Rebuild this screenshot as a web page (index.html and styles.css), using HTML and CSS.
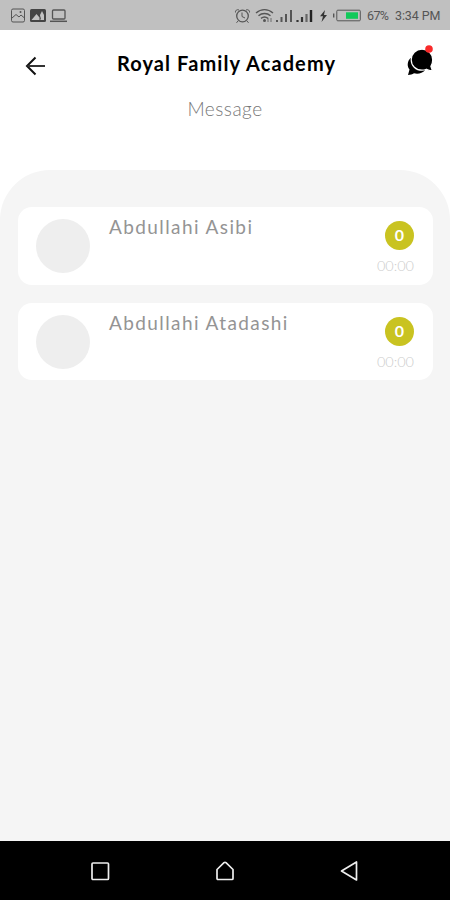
FILE: index.html
```html
<!DOCTYPE html>
<html lang="en">
<head>
    <meta charset="UTF-8">
    <meta name="viewport" content="width=device-width, initial-scale=1.0">
    <title>Royal Family Academy</title>
    <link rel="stylesheet" href="styles.css">
</head>
<body>
    <div class="status-bar">
        <svg class="status-left" width="70" height="30" viewBox="0 0 70 30" fill="none" stroke="#555">
            <rect x="11.5" y="9" width="13" height="13" rx="1.5"/>
            <path d="M12 18l4-3.500 3 2.500 2-2 3.500 3"/>
            <circle cx="20.500" cy="12" r="1" fill="#555" stroke="none"/>
            <rect x="30" y="9" width="16" height="13" rx="1.500" fill="#444" stroke="none"/>
            <path d="M31.500 20l5-6 3 3.500v2.500zM40 20c2-1 0-3 0-5l2-4 2 4v5z" fill="#c2c2c2" stroke="none"/>
            <rect x="52.500" y="10" width="12.500" height="9" rx="1" stroke-width="1.300"/>
            <path d="M50 21.300h17" stroke-width="1.500"/>
        </svg>
        <svg class="status-right" width="130" height="30" viewBox="232 0 130 30" fill="none" stroke="#555">
            <circle cx="242.500" cy="16" r="5.800" stroke-width="1.300"/>
            <path d="M242 12.500v4l3 1.500M235.500 12.500c-.5-2 1.500-3.500 3.500-2.500M249.500 12.500c.5-2-1.500-3.500-3.500-2.500M238 21l-1.500 1.800M247 21l1.500 1.800"/>
            <path d="M256 13c5-4.500 12-4.500 17 0M258.500 15.800c3.500-3 8.500-3 12 0M261 18.400c2-1.600 5-1.600 7 0" stroke-width="1.400"/>
            <circle cx="264.500" cy="20.600" r="1.500" fill="#555" stroke="none"/>
            <path d="M268 22v-4M271 22v-4" stroke-width=".8"/>
            <path d="M277 22v-2M281.500 22v-5M286 22v-8M291 22V10" stroke-width="2"/>
            <path d="M297.500 22v-2M302 22v-5" stroke="#333" stroke-width="2.200"/>
            <path d="M306.500 22v-8" stroke="#666" stroke-width="2.200"/>
            <path d="M311 22V10" stroke="#222" stroke-width="2.400"/>
            <path d="M325 10l-5 6.300h3L321.500 22l5.500-7h-3z" fill="#333" stroke="none"/>
            <path d="M333.700 13.500v4" stroke-width="1.400"/>
            <rect x="336.800" y="10.200" width="23.500" height="10.600" rx="1"/>
            <rect x="346" y="12.300" width="12" height="6.500" fill="#12c95a" stroke="none"/>
        </svg>
        <span class="battery">67%</span>
        <span class="clock">3:34 PM</span>
    </div>

    <header class="header">
        <svg width="22" height="20" viewBox="0 0 22 20" fill="none" stroke="#111" stroke-width="2">
            <path d="M10.500 1.500L2 10l8.500 8.500"/>
            <path d="M2.500 10H20" stroke="#333"/>
        </svg>
        <h1 class="title">Royal Family Academy</h1>
        <svg class="chat" width="28" height="32" viewBox="0 0 28 32">
            <path d="M3.500 14C0 17.500 0 22.500 2.500 25.500L1 31c2.500 0 4.300-.6 6-1.700 4 1 8.500 0 11-3z"/>
            <path d="M15 5.200c-6.200 0-10.800 4.500-10.800 10.500S8.800 26.200 15 26.200c1.600 0 3-.3 4.400-.9 1.600 1 3.400 1.500 6 1.500l-1.500-4.500c1.200-1.800 1.800-4 1.800-6.600 0-6-4.500-10.500-10.700-10.500z" stroke="white" stroke-width="1.200"/>
            <circle cx="22" cy="5" r="3.800" fill="#f92a2a"/>
        </svg>
    </header>
    <h2 class="subtitle">Message</h2>

    <main class="panel">
        <div class="card">
            <div class="avatar"></div>
            <div class="name">Abdullahi Asibi</div>
            <div class="info">
                <span class="badge">0</span>
                <span class="time">00:00</span>
            </div>
        </div>
        <div class="card">
            <div class="avatar"></div>
            <div class="name">Abdullahi Atadashi</div>
            <div class="info">
                <span class="badge">0</span>
                <span class="time">00:00</span>
            </div>
        </div>
    </main>

    <nav class="nav-bar">
        <svg width="20" height="22" viewBox="0 0 20 22" fill="none" stroke="#eee" stroke-width="1.700">
            <rect x="2" y="3" width="16.500" height="16.500" rx="1"/>
        </svg>
        <svg width="20" height="22" viewBox="0 0 20 22" fill="none" stroke="#eee" stroke-width="1.700" stroke-linejoin="round">
            <path d="M2 9.500L9 2.700q1-.8 2 0l7 6.800v9q0 1-1 1H3q-1 0-1-1z"/>
        </svg>
        <svg width="20" height="22" viewBox="0 0 20 22" fill="none" stroke="#eee" stroke-width="1.700" stroke-linejoin="round">
            <path d="M17.500 2v18L2.500 11z"/>
        </svg>
    </nav>
</body>
</html>
```

FILE: styles.css
```css
* {
    box-sizing: border-box;
}
body {
    margin: 0;
    height: 900px;
    display: flex;
    flex-direction: column;
    background: white;
    font-family: Lato, "Open Sans", sans-serif;
    overflow: hidden;
}
.status-bar {
    height: 30px;
    display: flex;
    align-items: center;
    background: #c0c0c0;
    color: #555;
    font: 12.5px/30px Roboto, sans-serif;
    white-space: nowrap;
}
.status-right {
    margin-left: 162px;
}
.battery {
    width: 28px;
    margin-left: 5px;
    padding-top: 2px;
    letter-spacing: -0.6px;
}
.clock {
    padding-top: 2px;
    letter-spacing: -0.1px;
}
.header {
    height: 66px;
    padding: 5px 15px 0 25px;
    display: flex;
    align-items: center;
    justify-content: space-between;
}
.title {
    margin: 0 1px 5px 0;
    font-size: 20px;
    line-height: 24px;
    font-weight: 700;
    letter-spacing: 1.1px;
    white-space: nowrap;
}
.chat {
    margin-top: -12px;
}
.subtitle {
    margin: 0;
    height: 74px;
    text-align: center;
    font-size: 19px;
    line-height: 26px;
    font-weight: 300;
    letter-spacing: 0.5px;
    color: #777;
}
.panel {
    flex: 1;
    padding: 37px 17px 0 18px;
    display: flex;
    flex-direction: column;
    gap: 18px;
    background: #f5f5f5;
    border-radius: 50px 50px 0 0;
}
.card {
    height: 77.5px;
    padding: 12px 19px 0 18px;
    display: flex;
    background: white;
    border-radius: 14px;
}
.avatar {
    width: 54px;
    height: 54px;
    border-radius: 50%;
    background: #eee;
}
.name {
    flex: 1;
    margin: -5px 0 0 19px;
    font-size: 19px;
    line-height: 26px;
    letter-spacing: 1.4px;
    color: #949494;
    white-space: nowrap;
}
.info {
    display: flex;
    flex-direction: column;
    align-items: flex-end;
    padding-top: 2px;
}
.badge {
    width: 29px;
    height: 29px;
    border-radius: 50%;
    background: #c9c321;
    color: white;
    font-size: 16px;
    line-height: 28px;
    font-weight: 700;
    text-align: center;
}
.time {
    margin-top: 7px;
    font-size: 14.5px;
    line-height: 18px;
    font-weight: 300;
    color: #ccc;
}
.nav-bar {
    height: 59px;
    padding: 0 91px 0 90px;
    display: flex;
    align-items: center;
    justify-content: space-between;
    background: black;
}
```
